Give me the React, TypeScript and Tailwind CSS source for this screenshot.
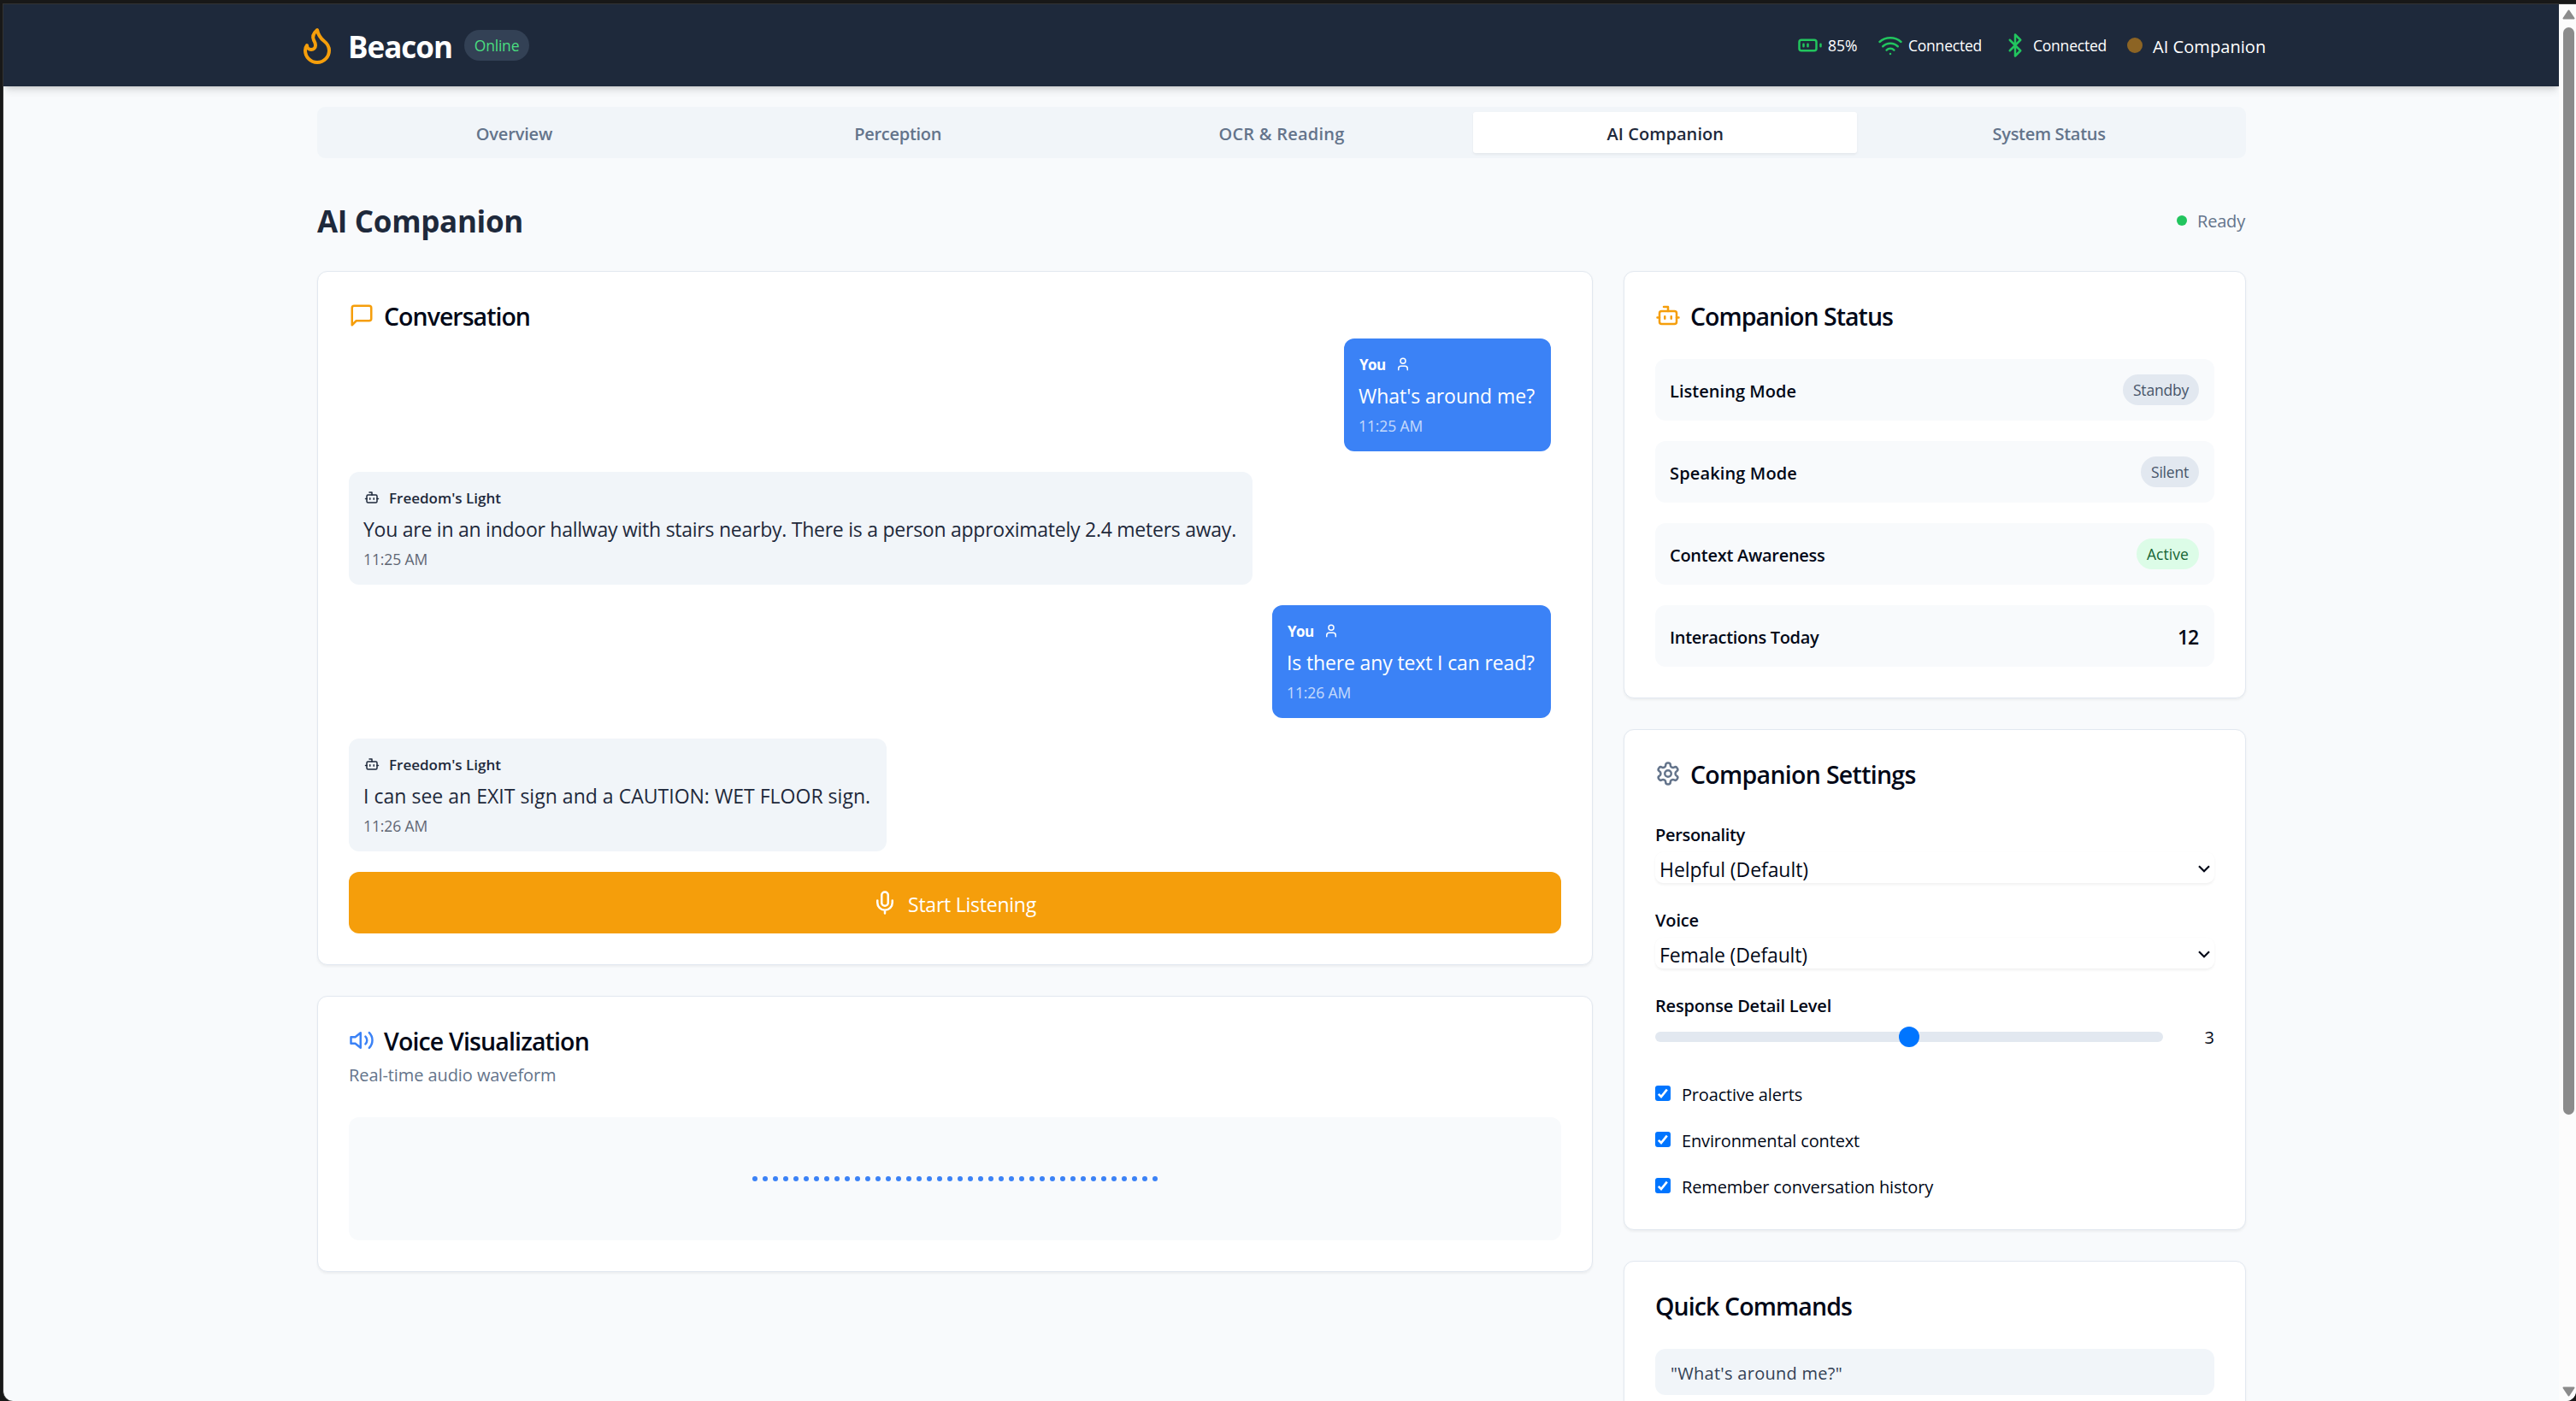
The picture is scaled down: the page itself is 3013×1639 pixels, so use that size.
import type { ReactNode } from "react";

function Icon({ className, children }: { className: string; children: ReactNode }) {
  return (
    <svg
      viewBox="0 0 24 24"
      fill="none"
      stroke="currentColor"
      strokeWidth={2}
      strokeLinecap="round"
      strokeLinejoin="round"
      className={`shrink-0 ${className}`}
    >
      {children}
    </svg>
  );
}

const Flame = ({ className }: { className: string }) => (
  <Icon className={className}>
    <path d="M8.5 14.5A2.5 2.5 0 0 0 11 12c0-1.38-.5-2-1-3-1.072-2.143-.224-4.054 2-6 .5 2.5 2 4.9 4 6.5 2 1.6 3 3.5 3 5.5a7 7 0 1 1-14 0c0-1.153.433-2.294 1-3a2.5 2.5 0 0 0 2.5 2.5z" />
  </Icon>
);
const Battery = ({ className }: { className: string }) => (
  <Icon className={className}>
    <rect width="16" height="10" x="2" y="7" rx="2" ry="2" />
    <path d="M22 11v2M6 11v2M10 11v2" />
  </Icon>
);
const Wifi = ({ className }: { className: string }) => (
  <Icon className={className}>
    <path d="M5 13a10 10 0 0 1 14 0" />
    <path d="M8.5 16.5a5 5 0 0 1 7 0" />
    <path d="M2 8.82a15 15 0 0 1 20 0" />
    <path d="M12 20h.01" />
  </Icon>
);
const Bluetooth = ({ className }: { className: string }) => (
  <Icon className={className}>
    <path d="m7 7 10 10-5 5V2l5 5L7 17" />
  </Icon>
);
const MessageSquare = ({ className }: { className: string }) => (
  <Icon className={className}>
    <path d="M21 15a2 2 0 0 1-2 2H7l-4 4V5a2 2 0 0 1 2-2h14a2 2 0 0 1 2 2z" />
  </Icon>
);
const User = ({ className }: { className: string }) => (
  <Icon className={className}>
    <path d="M19 21v-2a4 4 0 0 0-4-4H9a4 4 0 0 0-4 4v2" />
    <circle cx="12" cy="7" r="4" />
  </Icon>
);
const Bot = ({ className }: { className: string }) => (
  <Icon className={className}>
    <path d="M12 8V4H8" />
    <rect width="16" height="12" x="4" y="8" rx="2" />
    <path d="M2 14h2M20 14h2M15 13v2M9 13v2" />
  </Icon>
);
const Mic = ({ className }: { className: string }) => (
  <Icon className={className}>
    <path d="M12 2a3 3 0 0 0-3 3v7a3 3 0 0 0 6 0V5a3 3 0 0 0-3-3Z" />
    <path d="M19 10v2a7 7 0 0 1-14 0v-2M12 19v3" />
  </Icon>
);
const Volume = ({ className }: { className: string }) => (
  <Icon className={className}>
    <polygon points="11 5 6 9 2 9 2 15 6 15 11 19 11 5" />
    <path d="M15.54 8.46a5 5 0 0 1 0 7.07M19.07 4.93a10 10 0 0 1 0 14.14" />
  </Icon>
);
const Gear = ({ className }: { className: string }) => (
  <Icon className={className}>
    <path d="M12.22 2h-.44a2 2 0 0 0-2 2v.18a2 2 0 0 1-1 1.73l-.43.25a2 2 0 0 1-2 0l-.15-.08a2 2 0 0 0-2.73.73l-.22.38a2 2 0 0 0 .73 2.73l.15.1a2 2 0 0 1 1 1.72v.51a2 2 0 0 1-1 1.74l-.15.09a2 2 0 0 0-.73 2.73l.22.38a2 2 0 0 0 2.73.73l.15-.08a2 2 0 0 1 2 0l.43.25a2 2 0 0 1 1 1.73V20a2 2 0 0 0 2 2h.44a2 2 0 0 0 2-2v-.18a2 2 0 0 1 1-1.73l.43-.25a2 2 0 0 1 2 0l.15.08a2 2 0 0 0 2.73-.73l.22-.39a2 2 0 0 0-.73-2.73l-.15-.08a2 2 0 0 1-1-1.74v-.5a2 2 0 0 1 1-1.74l.15-.09a2 2 0 0 0 .73-2.73l-.22-.38a2 2 0 0 0-2.73-.73l-.15.08a2 2 0 0 1-2 0l-.43-.25a2 2 0 0 1-1-1.73V4a2 2 0 0 0-2-2z" />
    <circle cx="12" cy="12" r="3" />
  </Icon>
);

function Header() {
  return (
    <header className="h-24 w-full bg-[#1e293b] text-white shadow-[0_6px_9px_-1.5px_rgb(0_0_0/0.13),0_3px_6px_-3px_rgb(0_0_0/0.13)]">
      <div className="ml-[343px] flex h-full w-[2303px] items-center justify-between">
        <div className="flex items-center">
          <Flame className="size-12 text-[#f59e0b]" />
          <h1 className="ml-3 pt-[3px] text-[35px] leading-10 font-bold tracking-[-1px]">Beacon</h1>
          <span className="ml-3.5 flex h-9 w-[76px] items-center justify-center rounded-full bg-[#334155] text-[17.5px] tracking-[-0.21px] text-[#4ade80]">
            Online
          </span>
        </div>
        <div className="flex items-center gap-6 text-[17.5px] leading-6">
          <div className="flex items-center gap-1.5">
            <Battery className="size-[30px] text-[#22c55e]" />
            <span className="w-[34px] whitespace-nowrap">85%</span>
          </div>
          <div className="flex items-center gap-1.5">
            <Wifi className="size-[30px] text-[#22c55e]" />
            <span className="w-[86px] tracking-[-0.22px]">Connected</span>
          </div>
          <div className="flex items-center gap-1.5">
            <Bluetooth className="size-[30px] text-[#22c55e]" />
            <span className="w-[86px] tracking-[-0.22px]">Connected</span>
          </div>
          <div className="flex items-center gap-3">
            <span className="size-[18px] rounded-full bg-[#8c6424]" />
            <span className="w-[132px] pt-[3px] text-[20px] font-medium tracking-[0.06px] whitespace-nowrap">
              AI Companion
            </span>
          </div>
        </div>
      </div>
    </header>
  );
}

function Tabs() {
  const base = "flex items-center justify-center pt-[3px] text-[20px] font-semibold";
  return (
    <nav className="grid h-[60px] grid-cols-5 rounded-[9px] bg-[#f1f5f9] p-1.5 text-[#64748b]">
      <div className={`${base} tracking-[-0.15px]`}>Overview</div>
      <div className={`${base} tracking-[-0.28px]`}>Perception</div>
      <div className={`${base} tracking-[0.22px]`}>OCR &amp; Reading</div>
      <div
        className={`${base} rounded-[3px] bg-white tracking-[0.08px] text-[#1e293b] shadow-[0_1.5px_3px_0_rgb(0_0_0/0.05)]`}
      >
        AI Companion
      </div>
      <div className={`${base} tracking-[-0.31px]`}>System Status</div>
    </nav>
  );
}

function Card({ className = "", children }: { className?: string; children: ReactNode }) {
  return (
    <section
      className={`rounded-xl border border-[#e2e8f0] bg-white p-9 shadow-[0_1.5px_3px_0_rgb(0_0_0/0.05)] ${className}`}
    >
      {children}
    </section>
  );
}

function CardTitle({ icon, track, children }: { icon?: ReactNode; track: string; children: ReactNode }) {
  return (
    <div className="flex h-[30px] items-center gap-[11px]">
      {icon}
      <h3 className={`pt-0.5 text-[28.5px] leading-[30px] font-semibold whitespace-nowrap ${track}`}>{children}</h3>
    </div>
  );
}

function Bubble({
  mine = false,
  width,
  track,
  time,
  children,
}: {
  mine?: boolean;
  width: string;
  track: string;
  time: string;
  children: ReactNode;
}) {
  return (
    <div
      className={`h-[132px] rounded-xl pt-[18px] pl-[17px] whitespace-nowrap ${width} ${
        mine ? "self-end bg-[#3b82f6] text-white" : "bg-[#f1f5f9] text-[#1e293b]"
      }`}
    >
      <div className="flex h-6 items-center gap-3 pl-px">
        {mine ? (
          <>
            <span className="w-[30px] pt-0.5 text-[17px] leading-6 font-bold tracking-[-0.6px]">You</span>
            <User className="size-[18px]" />
          </>
        ) : (
          <>
            <Bot className="size-[18px]" />
            <span className="-ml-px pt-0.5 text-[17px] leading-6 font-semibold">Freedom's Light</span>
          </>
        )}
      </div>
      <p className={`mt-1.5 h-9 text-[23px] leading-[38px] ${track}`}>{children}</p>
      <p className="mt-1.5 text-[17.5px] leading-6 tracking-[-0.12px] opacity-70">{time}</p>
    </div>
  );
}

function StatusRow({ label, track, children }: { label: string; track: string; children: ReactNode }) {
  return (
    <div className="flex h-[72px] items-center justify-between rounded-xl bg-[#f8fafc] pr-[18px] pl-[17px]">
      <span className={`pt-[3px] text-[20px] font-semibold ${track}`}>{label}</span>
      {children}
    </div>
  );
}

function SelectField({
  label,
  labelTrack,
  value,
  valueTrack,
}: {
  label: string;
  labelTrack: string;
  value: string;
  valueTrack: string;
}) {
  return (
    <div className="mb-7">
      <div className={`text-[20px] leading-[32px] font-semibold ${labelTrack}`}>{label}</div>
      <div className="mt-1 flex h-9 items-center justify-between rounded-[9px] bg-white pr-[5px] pl-[5px] shadow-[0_1.5px_3px_0_rgb(0_0_0/0.06)]">
        <span className={`pt-1 text-[23px] leading-8 ${valueTrack}`}>{value}</span>
        <svg viewBox="0 0 14 9" className="mt-0.5 h-[9px] w-3.5" fill="none" stroke="currentColor" strokeWidth={2.2}>
          <path d="M1 1.2 7 7.2 13 1.2" />
        </svg>
      </div>
    </div>
  );
}

function CheckRow({ track, children }: { track: string; children: ReactNode }) {
  return (
    <div className="flex h-[30px] items-center gap-[13px]">
      <svg viewBox="0 0 18 18" className="size-[18px] shrink-0">
        <rect width="18" height="18" rx="3" fill="#0075ff" />
        <path d="M3.8 9.8 7 13 13.8 4.6" fill="none" stroke="#fff" strokeWidth={2.6} />
      </svg>
      <span className={`pt-[3px] text-[20px] leading-7 ${track}`}>{children}</span>
    </div>
  );
}

function Scrollbar() {
  return (
    <div className="flex w-5 shrink-0 flex-col items-center bg-[#fcfcfc] pt-1.5 pb-[5px] pl-[3px] text-[#8b8b8b]">
      <svg viewBox="0 0 15 12" className="h-3 w-[15px] shrink-0">
        <path
          d="M7.5 1.5 13.5 10.5H1.5Z"
          fill="currentColor"
          stroke="currentColor"
          strokeWidth={2}
          strokeLinejoin="round"
        />
      </svg>
      <div className="mt-[9px] h-[1272px] w-[13px] rounded-full bg-[#8b8b8b]" />
      <svg viewBox="0 0 15 12" className="mt-auto h-3 w-[15px] shrink-0">
        <path
          d="M7.5 10.5 13.5 1.5H1.5Z"
          fill="currentColor"
          stroke="currentColor"
          strokeWidth={2}
          strokeLinejoin="round"
        />
      </svg>
    </div>
  );
}

export default function App() {
  return (
    <div className="h-[1639px] w-full overflow-hidden bg-[#181818] pt-1 pl-[3px] font-['Open_Sans',sans-serif] text-[#020817]">
      <div className="flex h-full overflow-hidden rounded-b-xl border-t border-l border-[#333333] bg-[#f8fafc]">
        <div className="min-w-0 flex-1 overflow-hidden">
          <Header />
          <main className="ml-[343px] w-[2304px] px-6 pt-6">
            <Tabs />

            <div className="mt-[49px] mb-[35px] flex h-12 items-center justify-between">
              <h2 className="pt-0.5 text-[35px] leading-[48px] font-bold tracking-[-0.32px] text-[#1e293b]">
                AI Companion
              </h2>
              <div className="flex items-center gap-3 pr-px text-[#64748b]">
                <span className="size-3 rounded-full bg-[#22c55e]" />
                <span className="pt-0.5 text-[20px] leading-7 tracking-[-0.19px]">Ready</span>
              </div>
            </div>

            <div className="grid grid-cols-[1492px_728px] items-start gap-9">
              <div className="flex flex-col gap-9">
                <Card className="h-[812px]">
                  <CardTitle
                    icon={<MessageSquare className="size-[30px] text-[#f59e0b]" />}
                    track="tracking-[-0.97px]"
                  >
                    Conversation
                  </CardTitle>
                  <div className="mt-3 flex flex-col items-start gap-6 pr-3">
                    <Bubble mine width="w-[242px]" track="tracking-[-0.04px]" time="11:25 AM">
                      What's around me?
                    </Bubble>
                    <Bubble width="w-[1057px]" track="tracking-[-0.25px]" time="11:25 AM">
                      You are in an indoor hallway with stairs nearby. There is a person approximately 2.4 meters away.
                    </Bubble>
                    <Bubble mine width="w-[326px]" track="tracking-[-0.14px]" time="11:26 AM">
                      Is there any text I can read?
                    </Bubble>
                    <Bubble width="w-[629px]" track="tracking-[0.02px]" time="11:26 AM">
                      I can see an EXIT sign and a CAUTION: WET FLOOR sign.
                    </Bubble>
                  </div>
                  <button className="mt-6 flex h-[72px] w-full items-center justify-center gap-3 rounded-xl bg-[#f59e0b] pr-0.5 text-white">
                    <Mic className="size-[30px]" />
                    <span className="pt-[3px] text-[23px] leading-8 tracking-[-0.24px]">Start Listening</span>
                  </button>
                </Card>

                <Card className="h-[323px]">
                  <CardTitle icon={<Volume className="size-[30px] text-[#3b82f6]" />} track="tracking-[-0.85px]">
                    Voice Visualization
                  </CardTitle>
                  <p className="mt-[11px] text-[20px] leading-[30px] tracking-[-0.08px] text-[#64748b]">
                    Real-time audio waveform
                  </p>
                  <div className="mt-[34px] flex h-36 items-center justify-center gap-1.5 rounded-xl bg-[#f8fafc]">
                    {Array.from({ length: 40 }, (_, i) => (
                      <span key={i} className="size-1.5 rounded-full bg-[#3b82f6]" />
                    ))}
                  </div>
                </Card>
              </div>

              <div className="flex flex-col gap-9">
                <Card className="h-[500px]">
                  <CardTitle icon={<Bot className="size-[30px] text-[#f59e0b]" />} track="tracking-[-0.98px]">
                    Companion Status
                  </CardTitle>
                  <div className="mt-9 flex flex-col gap-6">
                    <StatusRow label="Listening Mode" track="tracking-[0.04px]">
                      <span className="flex h-9 w-[89px] items-center justify-center rounded-full bg-[#e2e8f0] text-[17.5px] tracking-[-0.21px] text-[#475569]">
                        Standby
                      </span>
                    </StatusRow>
                    <StatusRow label="Speaking Mode" track="tracking-[0.14px]">
                      <span className="flex h-9 w-[68px] items-center justify-center rounded-full bg-[#e2e8f0] text-[17.5px] tracking-[-0.2px] text-[#475569]">
                        Silent
                      </span>
                    </StatusRow>
                    <StatusRow label="Context Awareness" track="tracking-[-0.27px]">
                      <span className="flex h-9 w-[73px] items-center justify-center rounded-full bg-[#dcfce7] text-[17.5px] tracking-[0.05px] text-[#166534]">
                        Active
                      </span>
                    </StatusRow>
                    <StatusRow label="Interactions Today" track="tracking-[-0.31px]">
                      <span className="pt-0.5 pr-px text-[23px] font-semibold tracking-[-1.1px]">12</span>
                    </StatusRow>
                  </div>
                </Card>

                <Card className="h-[586px]">
                  <CardTitle icon={<Gear className="size-[30px] text-[#64748b]" />} track="tracking-[-0.7px]">
                    Companion Settings
                  </CardTitle>
                  <div className="mt-[41px]">
                    <SelectField
                      label="Personality"
                      labelTrack="tracking-[-0.32px]"
                      value="Helpful (Default)"
                      valueTrack="tracking-[-0.07px]"
                    />
                    <SelectField
                      label="Voice"
                      labelTrack="tracking-[-0.14px]"
                      value="Female (Default)"
                      valueTrack="tracking-[-0.15px]"
                    />
                    <div className="text-[20px] leading-[32px] font-semibold tracking-[-0.19px]">
                      Response Detail Level
                    </div>
                    <div className="mt-[5px] flex h-[30px] items-center justify-between">
                      <div className="flex h-3 w-[594px] items-center justify-center rounded-md bg-[#e2e8f0]">
                        <span className="size-6 rounded-full bg-[#0075ff]" />
                      </div>
                      <span className="pt-0.5 text-[20px] leading-[30px]">3</span>
                    </div>
                    <div className="mt-9 flex flex-col gap-6">
                      <CheckRow track="tracking-[-0.17px]">Proactive alerts</CheckRow>
                      <CheckRow track="tracking-[-0.15px]">Environmental context</CheckRow>
                      <CheckRow track="tracking-[-0.15px]">Remember conversation history</CheckRow>
                    </div>
                  </div>
                </Card>

                <Card>
                  <CardTitle track="tracking-[-0.89px]">Quick Commands</CardTitle>
                  <div className="mt-9 flex h-[54px] items-center rounded-xl bg-[#f1f5f9] px-[18px] pt-[3px] text-[20px] font-medium tracking-[0.28px] text-[#334155]">
                    "What's around me?"
                  </div>
                </Card>
              </div>
            </div>
          </main>
        </div>
        <Scrollbar />
      </div>
    </div>
  );
}
